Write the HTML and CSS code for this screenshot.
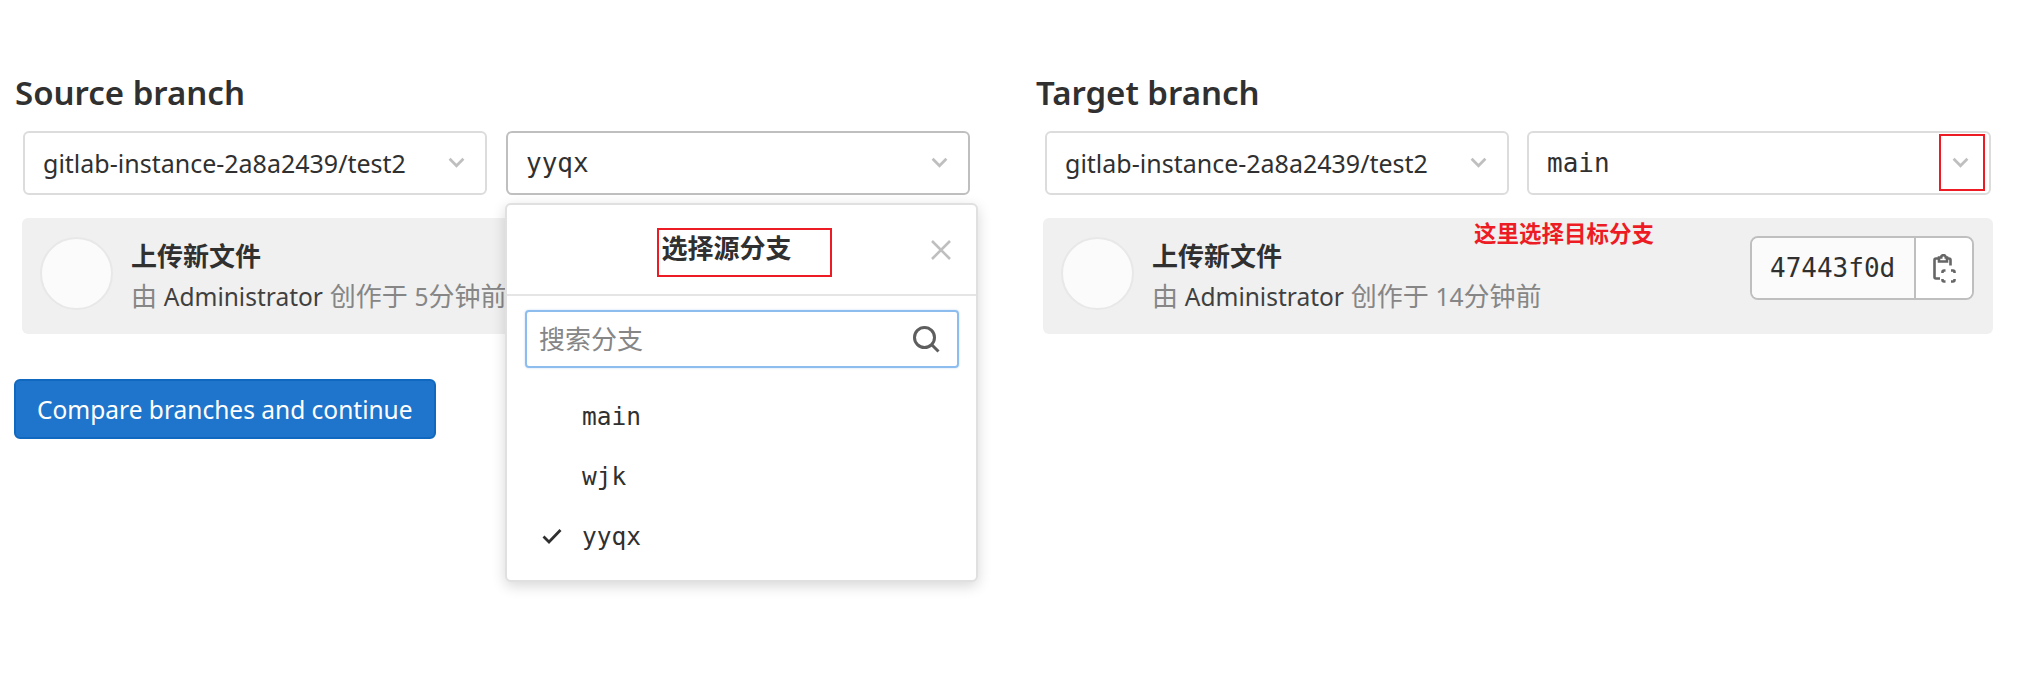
FILE: index.html
```html
<!DOCTYPE html>
<html lang="en">
<head>
  <meta charset="UTF-8">
  <meta name="viewport" content="width=device-width, initial-scale=1.0">
  <title>Compare branches</title>
  <link rel="stylesheet" href="styles.css">
</head>
<body>
  <div class="page">
    <div class="compare">
      <section class="branch-col source">
        <h2>Source branch</h2>
        <div class="select-row">
          <button class="select">
            <span>gitlab-instance-2a8a2439/test2</span>
            <svg class="chevron" viewBox="0 0 16 10"><path d="M1.500 1.500L8 8l6.500-6.500"/></svg>
          </button>
          <div class="select-wrap">
            <button class="select open">
              <span class="mono">yyqx</span>
              <svg class="chevron" viewBox="0 0 16 10"><path d="M1.500 1.500L8 8l6.500-6.500"/></svg>
            </button>
            <div class="dropdown">
              <div class="dropdown-header">
                <div class="dropdown-title">选择源分支</div>
                <button class="close">
                  <svg viewBox="0 0 20 20"><path d="M1 1l18 18M19 1L1 19"/></svg>
                </button>
              </div>
              <label class="search-box">
                <input type="text" placeholder="搜索分支">
                <svg viewBox="0 0 28 28"><circle cx="12.500" cy="12.500" r="10"/><path d="M20 20l6.500 6.500"/></svg>
              </label>
              <ul class="branch-list">
                <li><span class="check"></span><span>main</span></li>
                <li><span class="check"></span><span>wjk</span></li>
                <li>
                  <span class="check"><svg viewBox="0 0 20 16"><path d="M1.500 8.500l5.500 5.500L18.500 2"/></svg></span>
                  <span>yyqx</span>
                </li>
              </ul>
            </div>
          </div>
        </div>
        <div class="commit">
          <div class="avatar"></div>
          <div class="commit-info">
            <div class="commit-title">上传新文件</div>
            <div class="commit-meta">由 <span class="author">Administrator</span> 创作于 <span class="num">5</span>分钟前</div>
          </div>
        </div>
        <button class="compare-btn">Compare branches and continue</button>
      </section>

      <section class="branch-col target">
        <h2>Target branch</h2>
        <div class="select-row">
          <button class="select">
            <span>gitlab-instance-2a8a2439/test2</span>
            <svg class="chevron" viewBox="0 0 16 10"><path d="M1.500 1.500L8 8l6.500-6.500"/></svg>
          </button>
          <div class="select-wrap">
            <button class="select">
              <span class="mono">main</span>
              <svg class="chevron" viewBox="0 0 16 10"><path d="M1.500 1.500L8 8l6.500-6.500"/></svg>
            </button>
          </div>
        </div>
        <div class="commit">
          <div class="avatar"></div>
          <div class="commit-info">
            <div class="commit-title">上传新文件</div>
            <div class="commit-meta">由 <span class="author">Administrator</span> 创作于 <span class="num">14</span>分钟前</div>
          </div>
          <div class="sha-group">
            <span class="sha">47443f0d</span>
            <button class="copy">
              <svg viewBox="0 0 23 29">
                <path class="solid" d="M6 4.500H3A1.500 1.500 0 0 0 1.500 6v17A1.500 1.500 0 0 0 3 24.500h4M14 4.500h2A1.500 1.500 0 0 1 17.500 6v5.500"/>
                <path class="solid" d="M6 7.500v-4h2.200a2.300 2.300 0 0 1 4.600 0H14v4z"/>
                <path class="solid" d="M9.500 19v-1a1.500 1.500 0 0 1 1.500-1.500h1.500M18 16.500h2a1.500 1.500 0 0 1 1.500 1.500v1M21.500 25v1a1.500 1.500 0 0 1-1.500 1.500h-2M12.500 27.500H11A1.500 1.500 0 0 1 9.500 26v-1"/>
              </svg>
            </button>
          </div>
        </div>
      </section>
    </div>

    <!-- marcas rojas de la captura -->
    <div class="mark mark-title"></div>
    <div class="mark mark-chevron"></div>
    <div class="mark-note">这里选择目标分支</div>
  </div>
</body>
</html>
```

FILE: styles.css
```css
body {
  margin: 0;
  background-color: #fff;
  color: #303030;
  font-family: "Noto Sans", "Noto Sans CJK SC", sans-serif;
  font-size: 24px;
}

button {
  font-family: inherit;
  cursor: pointer;
}

.page {
  position: relative;
  height: 691px;
  overflow: hidden;
}

.compare {
  display: grid;
  grid-template-columns: 1021px 1fr;
  padding: 71px 0 0 15px;
}

h2 {
  margin: 0 0 17px;
  font-size: 33px;
  line-height: 43px;
  font-weight: 600;
  color: #303030;
}

.select-row {
  display: flex;
  gap: 19px;
  margin-left: 8px;
  width: 947px;
}

.select,
.select-wrap {
  width: 464px;
}

.select-wrap {
  position: relative;
}

.select {
  display: flex;
  justify-content: space-between;
  align-items: center;
  height: 64px;
  padding: 0 20px 0 18px;
  background-color: #fff;
  border: 2px solid #dcdcdc;
  border-radius: 6px;
  color: #303030;
  font-size: 25px;
}

.select.open {
  border-color: #bfbfbf;
}

.chevron {
  width: 17px;
  height: 11px;
  margin-top: -2px;
  fill: none;
  stroke: #bfbfbf;
  stroke-width: 2.6;
}

.mono,
.branch-list li {
  font-family: "DejaVu Sans Mono", monospace;
}

.mono {
  font-size: 26px;
}

.dropdown {
  position: absolute;
  top: 72px;
  left: -1px;
  z-index: 2;
  box-sizing: border-box;
  width: 473px;
  height: 379px;
  background-color: #fff;
  border: 2px solid #e0e0e0;
  border-radius: 6px;
  box-shadow: 0 4px 14px rgba(0, 0, 0, 0.16);
}

.dropdown-header {
  display: flex;
  align-items: center;
  height: 89px;
  padding: 0 20px;
  border-bottom: 2px solid #e5e5e5;
}

.dropdown-title {
  flex: 1;
  margin-top: -5px;
  text-align: center;
  font-size: 26px;
  font-weight: 700;
}

.close {
  width: 30px;
  height: 30px;
  padding: 5px;
  background: none;
  border: none;
}

.close svg {
  display: block;
  fill: none;
  stroke: #bfbfbf;
  stroke-width: 2.6;
}

.search-box {
  display: flex;
  align-items: center;
  box-sizing: border-box;
  height: 58px;
  margin: 14px 17px 0 18px;
  padding: 0 17px 0 10px;
  border: 2px solid #8cbdee;
  border-radius: 4px;
  box-shadow: 0 0 2px rgba(31, 117, 203, 0.3);
}

.search-box input {
  flex: 1;
  min-width: 0;
  border: none;
  outline: none;
  font-family: inherit;
  font-size: 26px;
}

.search-box input::placeholder {
  color: #868686;
}

.search-box svg {
  width: 28px;
  height: 28px;
  fill: none;
  stroke: #5e5e5e;
  stroke-width: 3;
}

.branch-list {
  list-style: none;
  margin: 18px 0 0;
  padding: 0;
}

.branch-list li {
  display: flex;
  align-items: center;
  height: 60px;
  padding-left: 35px;
  font-size: 24.500px;
}

.check {
  width: 40px;
}

.check svg {
  display: block;
  width: 20px;
  height: 16px;
  fill: none;
  stroke: #303030;
  stroke-width: 2.8;
}

.commit {
  display: flex;
  align-items: flex-start;
  box-sizing: border-box;
  width: 950px;
  height: 116px;
  margin: 23px 0 0 7px;
  padding: 19px 19px 0 18px;
  background-color: #f0f0f0;
  border-radius: 6px;
}

.avatar {
  box-sizing: border-box;
  flex: none;
  width: 73px;
  height: 73px;
  background-color: #fbfbfb;
  border: 2px solid #e8e8e8;
  border-radius: 50%;
}

.commit-info {
  flex: 1;
  margin: 1px 0 0 18px;
}

.commit-title {
  font-size: 26px;
  line-height: 36px;
  font-weight: 700;
}

.commit-meta {
  margin-top: 4px;
  font-size: 26px;
  line-height: 36px;
  color: #868686;
}

.author,
.num {
  font-size: 24.500px;
}

.author {
  color: #404040;
}

.sha-group {
  display: flex;
  box-sizing: border-box;
  height: 64px;
  margin-top: -1px;
  border: 2px solid #bfbfbf;
  border-radius: 8px;
  overflow: hidden;
}

.sha {
  display: flex;
  align-items: center;
  width: 162px;
  padding-left: 18px;
  box-sizing: border-box;
  background-color: #fbfbfb;
  font-family: "DejaVu Sans Mono", monospace;
  font-size: 26px;
}

.copy {
  width: 58px;
  padding: 0;
  background-color: #fff;
  border: none;
  border-left: 2px solid #bfbfbf;
}

.copy svg {
  display: block;
  width: 23px;
  height: 29px;
  margin: 0 auto;
}

.solid {
  fill: none;
  stroke: #666;
  stroke-width: 2.600;
}

.compare-btn {
  display: block;
  height: 60px;
  margin: 45px 0 0 -1px;
  padding: 0 21px;
  background-color: #1f75cb;
  border: 2px solid #1068bf;
  border-radius: 6px;
  color: #fff;
  font-size: 24.500px;
}

.target .select-row {
  gap: 18px;
  margin-left: 9px;
}

.mark {
  position: absolute;
  z-index: 3;
  box-sizing: border-box;
  border: 2px solid #ed1c24;
}

.mark-title {
  left: 657px;
  top: 228px;
  width: 175px;
  height: 49px;
}

.mark-chevron {
  left: 1939px;
  top: 134px;
  width: 46px;
  height: 57px;
}

.mark-note {
  position: absolute;
  z-index: 3;
  left: 1474px;
  top: 219px;
  font-size: 22.500px;
  line-height: 30px;
  font-weight: 700;
  color: #ed1c24;
}
```
